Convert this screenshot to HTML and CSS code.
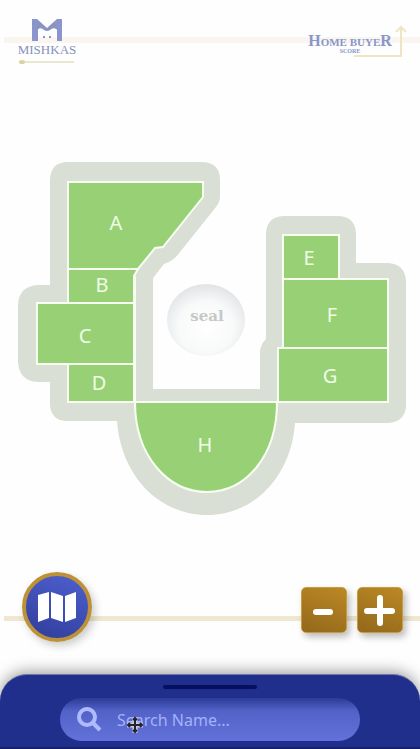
FILE: index.html
```html
<!DOCTYPE html>
<html lang="en">
<head>
<meta charset="utf-8">
<meta name="viewport" content="width=device-width, initial-scale=1">
<title>Mishkas seating map</title>
<link rel="stylesheet" href="styles.css">
</head>
<body>
<header class="header">
  <svg class="brand" viewBox="0 0 66 54" role="img" aria-label="Mishkas">
    <path class="brand-mark" d="M18 5H23L33 14L43 5H48V27H43V15Q39 13 36 16Q33 18 30 16Q27 13 24 15V27H18V5Z"/>
    <path class="brand-ears" d="M23 15L26 10L32 15M34 15L40 10L43 15"/>
    <path class="brand-mark" d="M29 22h2v2h-2zM35 22h2v2h-2z"/>
    <text class="brand-name" x="33" y="40" text-anchor="middle">MISHKAS</text>
    <path class="brand-rule" d="M5 48H60"/>
    <ellipse class="brand-bead" cx="8" cy="48" rx="3" ry="2"/>
  </svg>
  <svg class="partner" viewBox="0 0 104 54" role="img" aria-label="Home Buyer">
    <path class="gold-arrow" d="M38 42H85V13M80 18L85 13L90 18"/>
    <text class="partner-name" x="34" y="32" text-anchor="middle"><tspan class="big">H</tspan>OME BUYE<tspan class="big">R</tspan></text>
    <text class="tiny" x="34" y="39" text-anchor="middle">SCORE</text>
  </svg>
</header>
<main class="main">
  <svg class="map" viewBox="0 80 420 480" role="img" aria-label="Seating areas A to H">
    <defs>
      <radialGradient id="dome" cx=".5" cy=".6" r=".6">
        <stop offset="0" stop-color="#ffffff"/>
        <stop offset=".6" stop-color="#f8f9f9"/>
        <stop offset="1" stop-color="#e2e3e6"/>
      </radialGradient>
    </defs>
    <path class="walkway" d="M66 162H203Q220 163 220 180V196Q220 202 216 207L180 252Q174 261 164 264L153 278V389H260V351Q261 344 266 339V233Q267 217 283 216H339Q355 217 356 233V263H388Q405 264 406 281V406Q405 422 388 423H295C291 477 254 515 207 515C160 515 121 477 117 421H66Q51 420 50 405V382H38Q19 381 18 362V305Q19 286 38 285H50V179Q51 163 66 162Z"/>
    <g class="areas">
      <path d="M68 182H203V197L163 247L155 248L138 269H68Z"/>
      <path d="M68 269H138L134 276V303H68Z"/>
      <path d="M37 303H134V364H37Z"/>
      <path d="M68 364H134V402H68Z"/>
      <path d="M283 235H339V279H283Z"/>
      <path d="M283 279H388V348H283Z"/>
      <path d="M278 348H388V402H278Z"/>
      <path d="M135 402H277C277 456 246 492 207 492C168 492 135 456 135 402Z"/>
    </g>
    <path class="seam" d="M135 276V410M134 402H278"/>
    <g class="labels">
      <text x="116" y="230">A</text>
      <text x="102" y="292">B</text>
      <text x="85" y="343">C</text>
      <text x="99" y="390">D</text>
      <text x="309" y="265">E</text>
      <text x="332" y="322">F</text>
      <text x="330" y="383">G</text>
      <text x="205" y="452">H</text>
    </g>
    <ellipse cx="206" cy="320" rx="39" ry="36" fill="url(#dome)"/>
    <text class="seal" x="207" y="321">seal</text>
  </svg>
  <div class="controls">
    <button class="map-button" type="button" aria-label="Map">
      <svg class="map-icon" viewBox="0 0 40 32">
        <path d="M1 4L12 1V27L1 31ZM14 1L26 5V31L14 27ZM28 5L39 1V27L28 31Z"/>
      </svg>
    </button>
    <button class="zoom-button" type="button" aria-label="Zoom out">
      <svg class="zoom-icon" viewBox="0 0 32 32"><path d="M8 18H22"/></svg>
    </button>
    <button class="zoom-button" type="button" aria-label="Zoom in">
      <svg class="zoom-icon" viewBox="0 0 32 32"><path d="M3 17H28M16 4V29"/></svg>
    </button>
  </div>
</main>
<section class="sheet">
  <div class="handle"></div>
  <form class="search">
    <svg class="search-icon" viewBox="0 0 26 26"><circle cx="11" cy="10" r="8"/><path d="M17 16L24 23"/></svg>
    <input class="search-input" type="text" aria-label="Search name" placeholder="Search Name...">
    <svg class="cursor" viewBox="0 0 18 18">
      <path class="cursor-halo" d="M9 1V17M1 9H17"/>
      <path class="cursor-core" d="M9 2V16M2 9H16M7 4L9 2L11 4M7 14L9 16L11 14M4 7L2 9L4 11M14 7L16 9L14 11"/>
    </svg>
  </form>
</section>
</body>
</html>
```
FILE: styles.css
```css
* {
  box-sizing: border-box;
}

body {
  margin: 0;
  min-height: 100vh;
  display: flex;
  flex-direction: column;
  overflow-x: hidden;
  background: #fefefe;
  font-family: "Noto Sans", sans-serif;
}

svg {
  display: block;
}

.header {
  display: flex;
  justify-content: space-between;
  height: 80px;
  padding: 14px 0 0 14px;
  background: linear-gradient(#f8f6ee, #f8f6ee) 4px 37px / 100% 6px no-repeat;
}

.brand {
  width: 66px;
  height: 54px;
}

.brand-mark {
  fill: #8995cc;
}

.brand-ears {
  fill: none;
  stroke: #8b94b7;
  stroke-width: 2;
}

.brand-name {
  font: 13px "Liberation Serif", serif;
  fill: #8790be;
}

.brand-rule {
  stroke: #ebe7cf;
  stroke-width: 2;
}

.brand-bead {
  fill: #ddd3a0;
}

.partner {
  width: 104px;
  height: 54px;
  overflow: visible;
}

.gold-arrow {
  fill: none;
  stroke: #efe5c2;
  stroke-width: 2;
}

.partner-name {
  font: bold 11px "Liberation Serif", serif;
  fill: #8995cb;
}

.big {
  font-size: 16px;
}

.tiny {
  font: bold 6px "Liberation Serif", serif;
  fill: #8995cb;
}

.main {
  flex: 1;
  display: flex;
  flex-direction: column;
}

.map {
  width: 100%;
}

.walkway {
  fill: #dadfd5;
}

.areas {
  fill: #98d175;
  stroke: #f6fff0;
  stroke-width: 2;
}

.seam {
  fill: none;
  stroke: #f6fff0;
  stroke-width: 2;
}

.labels {
  font-size: 20px;
  text-anchor: middle;
  fill: #f0fce8;
}

.seal {
  font: bold 15px "DejaVu Serif", serif;
  text-anchor: middle;
  fill: #c6c8c7;
}

.controls {
  display: flex;
  align-items: center;
  gap: 10px;
  margin-top: auto;
  height: 114px;
  padding: 0 17px 20px 22px;
  background: linear-gradient(#f0e7d1, #f0e7d1) 4px 56px / 100% 5px no-repeat;
}

.map-button {
  display: grid;
  place-items: center;
  width: 70px;
  height: 70px;
  margin-right: auto;
  padding: 0;
  border: 4px solid #bd9138;
  border-radius: 50%;
  background: linear-gradient(20deg, #303d9a, #4e60cf);
  box-shadow: 3px 4px 9px #0003;
}

.map-icon {
  width: 40px;
  height: 32px;
  fill: #ffffff;
}

.zoom-button {
  display: grid;
  place-items: center;
  width: 46px;
  height: 46px;
  margin-top: 6px;
  padding: 0;
  border: 1px solid #c79c3c;
  border-radius: 5px;
  background: linear-gradient(200deg, #bb8824, #93681b);
  box-shadow: 3px 4px 7px #0004;
}

.zoom-icon {
  width: 32px;
  height: 32px;
  fill: none;
  stroke: #ffffff;
  stroke-width: 6;
  stroke-linecap: round;
}

.sheet {
  display: flex;
  flex-direction: column;
  align-items: center;
  gap: 9px;
  height: 75px;
  padding-top: 10px;
  border-top: 1px solid #7079a8;
  border-bottom: 2px solid #17206a;
  border-radius: 27px 27px 0 0;
  background: #202f8c;
  box-shadow: 0 -2px 15px #0006;
}

.handle {
  width: 94px;
  height: 4px;
  border-radius: 2px;
  background: #06105f;
}

.search {
  position: relative;
  display: flex;
  align-items: center;
  gap: 15px;
  width: calc(100% - 120px);
  height: 43px;
  padding: 0 16px;
  border-radius: 22px;
  background: linear-gradient(#2c3b97, #5262c7 30%, #6272da);
}

.search-icon {
  flex: none;
  width: 26px;
  height: 26px;
  fill: none;
  stroke: #b0bbff;
  stroke-width: 4;
}

.search-input {
  flex: 1;
  min-width: 0;
  padding: 0;
  border: 0;
  outline: 0;
  background: transparent;
  color: #a5b1fa;
  font: 16px "Noto Sans", sans-serif;
}

.search-input::placeholder {
  color: #a5b1fa;
  opacity: 1;
}

.cursor {
  position: absolute;
  left: 66px;
  top: 18px;
  width: 18px;
  height: 18px;
  fill: none;
}

.cursor-halo {
  stroke: #c8cbdc;
  stroke-width: 5;
}

.cursor-core {
  stroke: #25242c;
  stroke-width: 2;
}
```
